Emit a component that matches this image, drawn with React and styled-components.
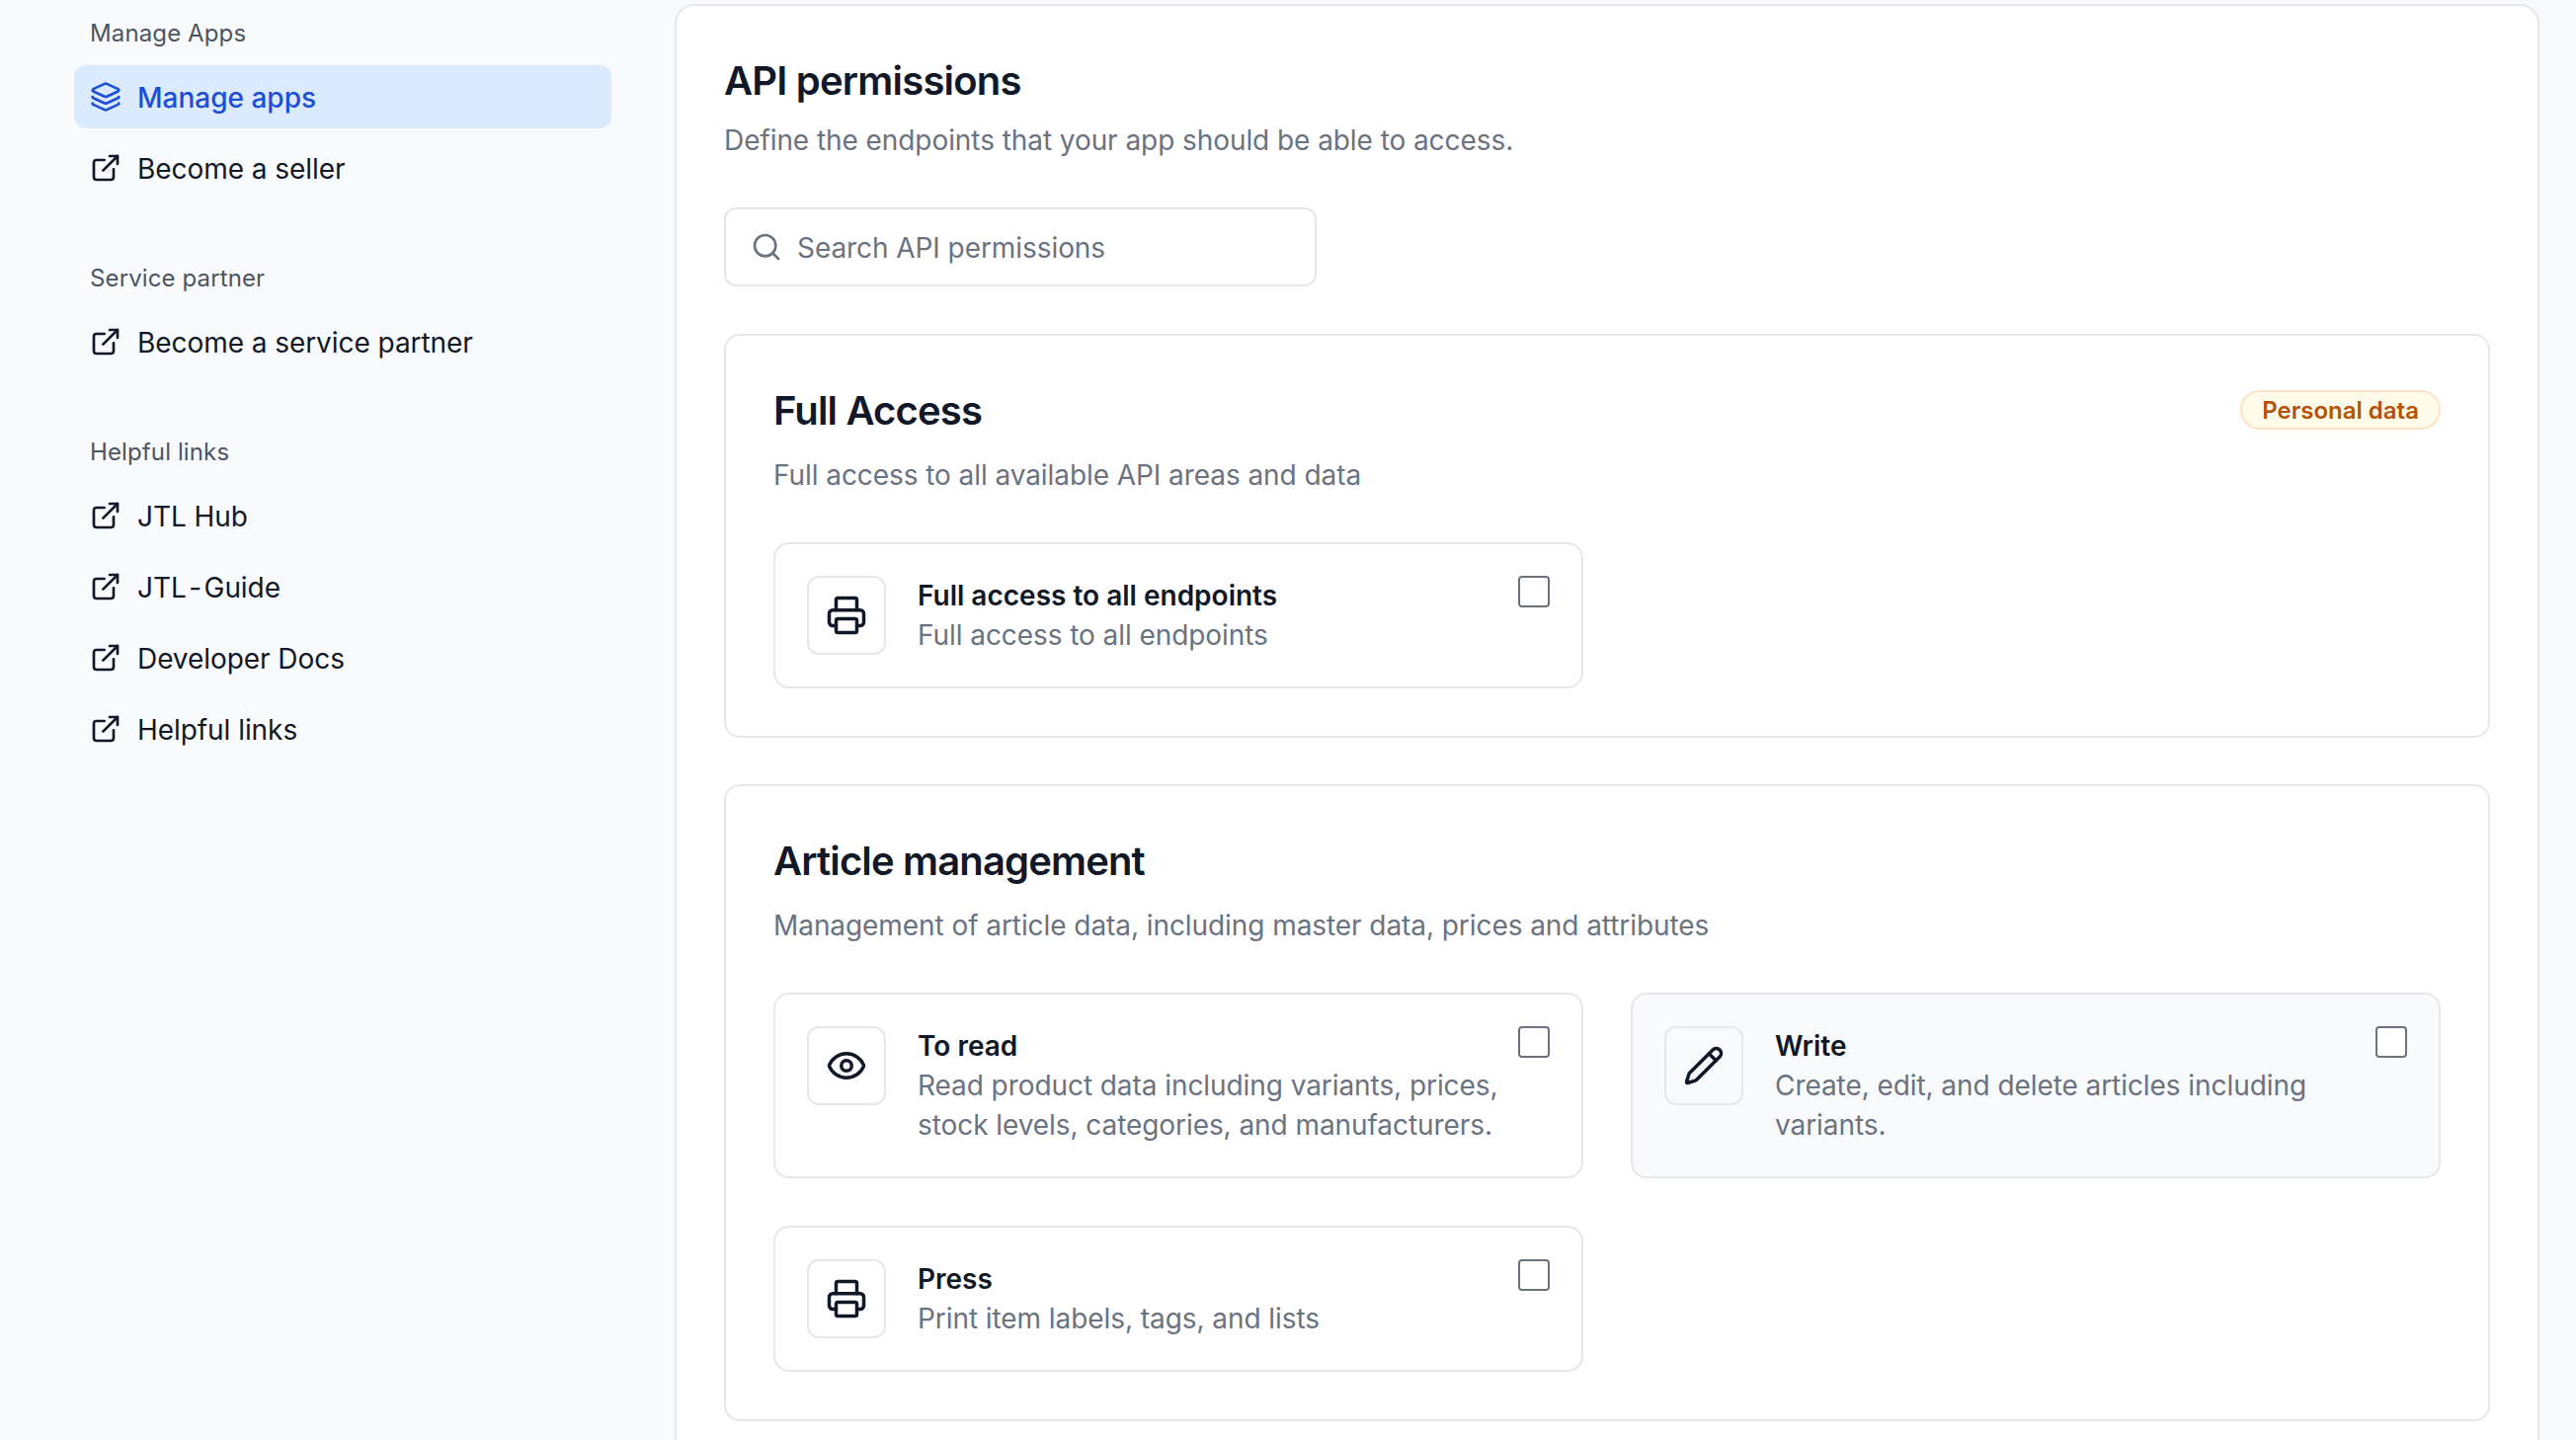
import React from "react";
import styled, { createGlobalStyle } from "styled-components";
import { Layers, ExternalLink, Search, Printer, Eye, Pencil } from "lucide-react";

const Global = createGlobalStyle`
  html, body { margin: 0; padding: 0; height: 1458px; overflow: hidden; background: #f9fafb; }
  body { font-family: Inter, "Liberation Sans", sans-serif; color: #111827; -webkit-font-smoothing: antialiased; }
  * { box-sizing: border-box; }
`;

const Page = styled.div`
  display: grid;
  grid-template-columns: 683px 1888px;
  height: 1458px;
  overflow: hidden;
`;
const Sidebar = styled.aside`
  padding: 16px 64px 0 75px;
  display: flex;
  flex-direction: column;
  gap: 62px;
`;
const NavGroup = styled.nav`
  display: flex;
  flex-direction: column;
  gap: 8px;
`;
const NavHeading = styled.div`
  height: 36px;
  padding-left: 16px;
  margin-bottom: 6px;
  font-size: 24px;
  line-height: 36px;
  font-weight: 400;
  letter-spacing: 0.12px;
  color: #4b5563;
`;
const NavItem = styled.a`
  height: 64px;
  display: flex;
  align-items: center;
  gap: 16px;
  padding: 0 16px;
  border-radius: 12px;
  font-size: 28px;
  font-weight: ${(p) => (p.$active ? 500 : 400)};
  letter-spacing: ${(p) => (p.$active ? "0" : "-0.06px")};
  color: ${(p) => (p.$active ? "#1d4ed8" : "#111827")};
  background: ${(p) => (p.$active ? "#dbeafe" : "transparent")};
`;
const NavLabel = styled.span`
  padding-top: 2px;
`;
const Hyphen = styled.span`
  margin: 0 2.5px;
`;
const Main = styled.main`
  padding-top: 4px;
`;
const Panel = styled.section`
  background: #fff;
  border: 2px solid #e5e7eb;
  border-radius: 20px;
  padding: 48px 48px 0;
  min-height: 1600px;
`;
const PageTitle = styled.h1`
  margin: 0;
  font-size: 40px;
  line-height: 56px;
  font-weight: 600;
  letter-spacing: -0.8px;
  color: #111827;
`;
const PageSub = styled.p`
  margin: 12px 0 0;
  font-size: 28px;
  line-height: 40px;
  letter-spacing: -0.07px;
  color: #6b7280;
`;
const SearchBox = styled.div`
  margin-top: 48px;
  width: 600px;
  height: 80px;
  display: flex;
  align-items: center;
  gap: 15px;
  padding: 0 25px;
  border: 2px solid #e5e7eb;
  border-radius: 12px;
  background: #fff;
  color: #6b7280;
`;
const SearchText = styled.span`
  padding-top: 1px;
  font-size: 28px;
  letter-spacing: -0.07px;
  color: #6b7280;
`;
const Section = styled.section`
  margin-top: 48px;
  padding: 48px;
  border: 2px solid #e5e7eb;
  border-radius: 16px;
  background: #fff;
  & + & {
    margin-top: 47px;
  }
`;
const SectionHead = styled.div`
  display: flex;
  justify-content: space-between;
  align-items: flex-start;
`;
const SectionTitle = styled.h2`
  margin: 0;
  font-size: 40px;
  line-height: 56px;
  font-weight: 600;
  letter-spacing: -0.85px;
  color: #111827;
`;
const Badge = styled.span`
  height: 40px;
  padding: 0 20px;
  display: inline-flex;
  align-items: center;
  margin-top: 7px;
  border: 2px solid #fde2c4;
  border-radius: 999px;
  background: #fffbeb;
  color: #b45309;
  font-size: 24px;
  font-weight: 600;
`;
const SectionSub = styled.p`
  margin: 17px 0 0;
  font-size: 28px;
  line-height: 40px;
  letter-spacing: -0.07px;
  color: #6b7280;
`;
const Grid = styled.div`
  margin-top: 48px;
  display: grid;
  grid-template-columns: 1fr 1fr;
  gap: 48px;
`;
const Card = styled.div`
  display: flex;
  align-items: flex-start;
  padding: 32px;
  border: 2px solid #e5e7eb;
  border-radius: 16px;
  background: ${(p) => (p.$muted ? "#f9fafb" : "#fff")};
`;
const IconBox = styled.div`
  flex: none;
  width: 80px;
  height: 80px;
  margin-right: 32px;
  display: flex;
  align-items: center;
  justify-content: center;
  border: 2px solid #e5e7eb;
  border-radius: 12px;
  background: ${(p) => (p.$muted ? "#f9fafb" : "#fff")};
  color: #111827;
`;
const CardBody = styled.div`
  flex: 1;
  min-width: 0;
`;
const CardTitle = styled.div`
  font-size: 28px;
  line-height: 40px;
  font-weight: 600;
  color: #111827;
`;
const CardDesc = styled.div`
  font-size: 28px;
  line-height: 40px;
  letter-spacing: -0.07px;
  color: #6b7280;
`;
const Check = styled.span`
  flex: none;
  width: 32px;
  height: 32px;
  margin-left: 16px;
  border: 2px solid #6b7280;
  border-radius: 4px;
  background: #fff;
`;

const PermCard = ({ icon: Icon, title, desc, muted }) => (
  <Card $muted={muted}>
    <IconBox $muted={muted}>
      <Icon size={42} strokeWidth={2} />
    </IconBox>
    <CardBody>
      <CardTitle>{title}</CardTitle>
      <CardDesc>{desc}</CardDesc>
    </CardBody>
    <Check />
  </Card>
);

const groups = [
  { heading: "Manage Apps", items: ["Manage apps", "Become a seller"] },
  { heading: "Service partner", items: ["Become a service partner"] },
  { heading: "Helpful links", items: ["JTL Hub", "JTL-Guide", "Developer Docs", "Helpful links"] },
];

const renderLabel = (item) => {
  const [before, after] = item.split("-");
  if (after === undefined) return item;
  return (
    <>
      {before}
      <Hyphen>-</Hyphen>
      {after}
    </>
  );
};

export default function App() {
  return (
    <Page>
      <Global />
      <Sidebar>
        {groups.map((g) => (
          <NavGroup key={g.heading}>
            <NavHeading>{g.heading}</NavHeading>
            {g.items.map((item) => {
              const active = item === "Manage apps";
              const Icon = active ? Layers : ExternalLink;
              return (
                <NavItem key={item} $active={active}>
                  <Icon size={32} strokeWidth={2} />
                  <NavLabel>{renderLabel(item)}</NavLabel>
                </NavItem>
              );
            })}
          </NavGroup>
        ))}
      </Sidebar>
      <Main>
        <Panel>
          <PageTitle>API permissions</PageTitle>
          <PageSub>Define the endpoints that your app should be able to access.</PageSub>
          <SearchBox>
            <Search size={32} strokeWidth={2} />
            <SearchText>Search API permissions</SearchText>
          </SearchBox>
          <Section>
            <SectionHead>
              <SectionTitle>Full Access</SectionTitle>
              <Badge>Personal data</Badge>
            </SectionHead>
            <SectionSub>Full access to all available API areas and data</SectionSub>
            <Grid>
              <PermCard icon={Printer} title="Full access to all endpoints" desc="Full access to all endpoints" />
            </Grid>
          </Section>
          <Section>
            <SectionHead>
              <SectionTitle>Article management</SectionTitle>
            </SectionHead>
            <SectionSub>Management of article data, including master data, prices and attributes</SectionSub>
            <Grid>
              <PermCard icon={Eye} title="To read" desc="Read product data including variants, prices, stock levels, categories, and manufacturers." />
              <PermCard icon={Pencil} muted title="Write" desc="Create, edit, and delete articles including variants." />
              <PermCard icon={Printer} title="Press" desc="Print item labels, tags, and lists" />
            </Grid>
          </Section>
        </Panel>
      </Main>
    </Page>
  );
}
